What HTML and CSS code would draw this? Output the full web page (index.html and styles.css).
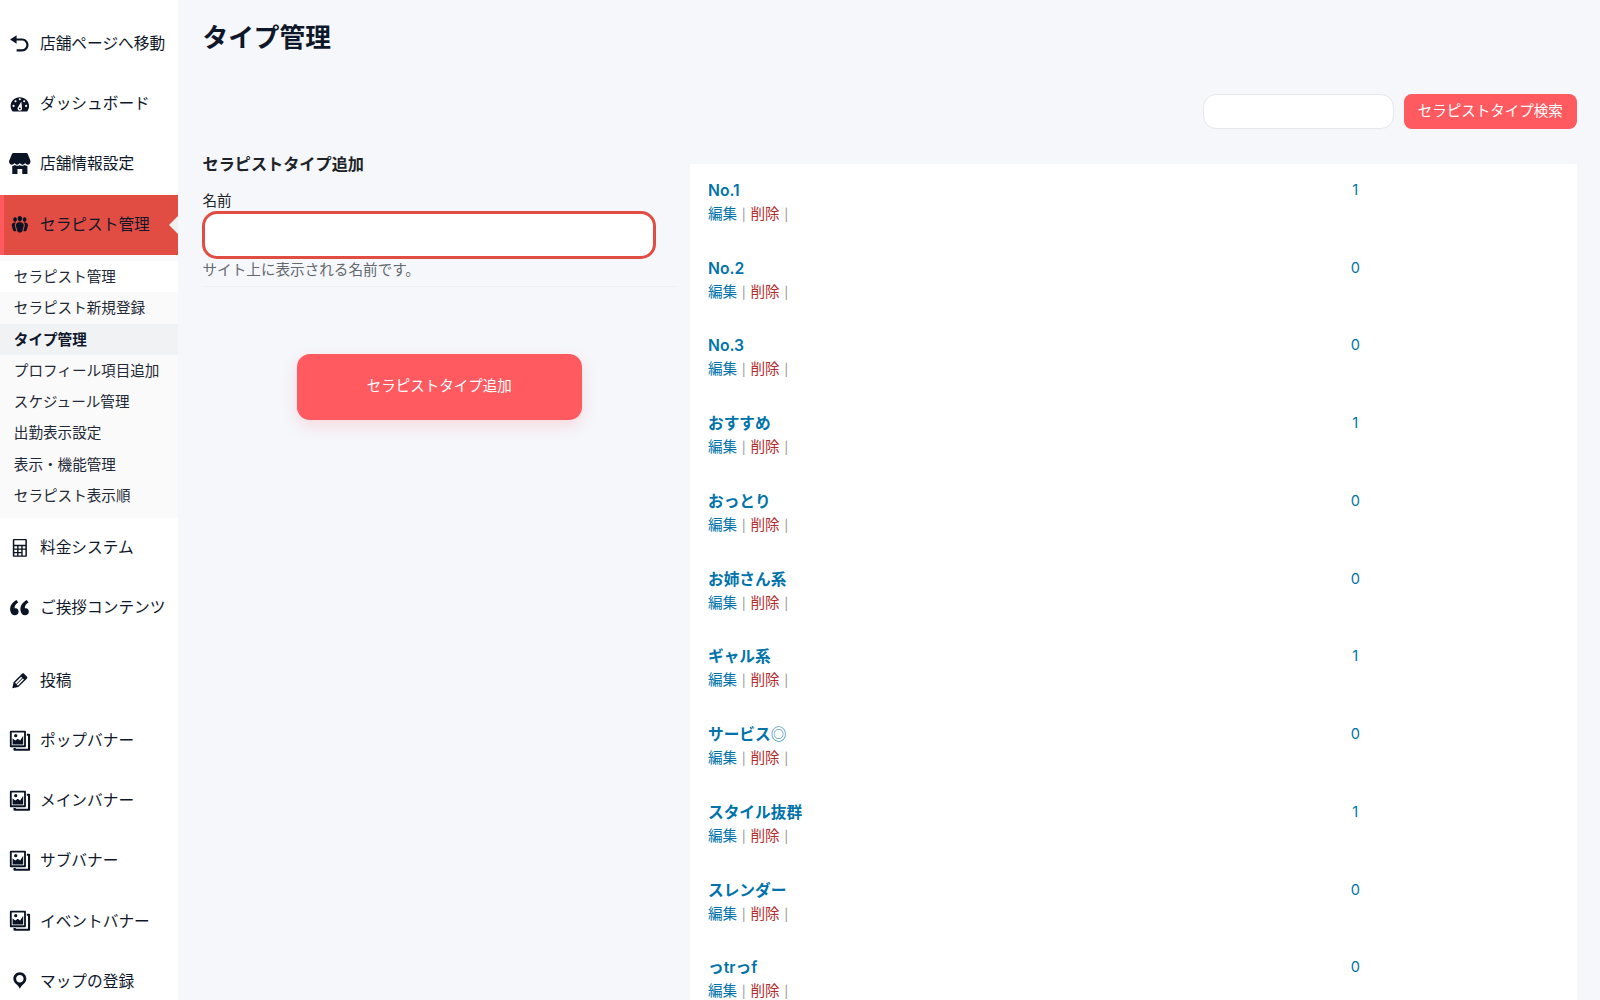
FILE: index.html
```html
<!DOCTYPE html>
<html lang="ja">
<head>
<meta charset="utf-8">
<title>タイプ管理</title>
<link rel="stylesheet" href="styles.css">
</head>
<body>
<svg class="sprite" aria-hidden="true">
  <symbol id="undo" viewBox="0 0 20 20"><path d="M12 5H7V2L1 6l6 4V7h5c2.2 0 4 1.8 4 4s-1.8 4-4 4H7v2h5c3.3 0 6-2.7 6-6s-2.7-6-6-6z"/></symbol>
  <symbol id="dashboard" viewBox="0 0 20 20"><path fill-rule="evenodd" d="M3.300 17h13.400c1.100-1.370 1.800-3.110 1.800-5 0-4.420-3.800-8-8.500-8s-8.500 3.580-8.500 8c0 1.890.7 3.630 1.800 5zM10 4.800a1 1 0 1 1 0 2 1 1 0 0 1 0-2zM6 6.600a1 1 0 1 1 0 2 1 1 0 0 1 0-2zM14 6.600a1 1 0 1 1 0 2 1 1 0 0 1 0-2zM4.200 10.900a1 1 0 1 1 0 2 1 1 0 0 1 0-2zM15.800 10.900a1 1 0 1 1 0 2 1 1 0 0 1 0-2zM11.400 7.800l.6 6a2.100 2.100 0 1 1-3.900-.5zM10 13.300a.9.9 0 1 0 0 1.800.9.9 0 0 0 0-1.800z"/></symbol>
  <symbol id="store" viewBox="0 0 20 20"><path d="M4 0h12c.6 0 .9.2 1.200.7L20 7.500c0 1.900-1.300 3.300-2.700 3.300-1.300 0-2.200-.7-2.400-1.700-.2 1-1.200 1.700-2.400 1.700s-2.300-.7-2.500-1.700c-.2 1-1.300 1.700-2.500 1.700s-2.200-.7-2.400-1.700c-.2 1-1.100 1.700-2.400 1.700C1.300 10.800 0 9.400 0 7.500L2.800.7C3.100.2 3.400 0 4 0z"/><path d="M3 12c1 0 1.700-.3 2.300-.9.800.7 3.700 1.300 4.700 0 1 1.300 3.900.7 4.700 0 .6.600 1.300.9 2.300.9v7.500h-4.800v-4.800H7.800v4.800H3z"/></symbol>
  <symbol id="groups" viewBox="0 0 20 20"><path d="M8.030 4.460c-.29 1.280.55 3.460 1.970 3.460 1.410 0 2.250-2.180 1.960-3.460-.22-.98-1.080-1.630-1.960-1.630-.89 0-1.740.65-1.970 1.630zm-4.130.9c-.25 1.080.47 2.930 1.670 2.930s1.920-1.850 1.670-2.930c-.19-.83-.92-1.390-1.670-1.390s-1.480.56-1.670 1.390zm8.860 0c-.25 1.080.47 2.930 1.660 2.930 1.200 0 1.920-1.850 1.670-2.930-.19-.83-.92-1.390-1.670-1.390-.74 0-1.470.56-1.660 1.390zm-.59 11.430l1.250-4.300C14.200 10 12.710 8.470 10 8.470c-2.720 0-4.210 1.530-3.440 4.020l1.260 4.300C8.050 17.510 9 18 10 18c.98 0 1.940-.49 2.170-1.210zm-6.100-7.630c-.49.67-.96 1.830-.42 3.590l1.120 3.790c-.34.2-.77.31-1.200.31-.85 0-1.650-.41-1.850-1.030l-1.070-3.650c-.65-2.110.61-3.400 2.920-3.400.27 0 .54.02.79.06-.1.1-.2.22-.29.33zm8.350-.39c2.310 0 3.580 1.290 2.920 3.400l-1.070 3.650c-.2.62-1 1.030-1.850 1.030-.43 0-.86-.11-1.200-.31l1.110-3.770c.55-1.780.08-2.940-.42-3.610-.08-.11-.18-.23-.28-.33.25-.04.51-.06.79-.06z"/></symbol>
  <symbol id="calculator" viewBox="0 0 20 20"><path fill-rule="evenodd" d="M4.600 1.800h10.800q1.100 0 1.100 1.100v14.300q0 1.100-1.100 1.100H4.600q-1.100 0-1.100-1.100V2.900q0-1.100 1.100-1.100zM4.900 3.100v4.100h10.200V3.100zM4.900 8.600v2.100h2.600V8.600zM8.800 8.600v2.100h2.500V8.600zM12.600 8.600v2.100h2.500V8.600zM4.900 11.800v2.100h2.600v-2.100zM8.800 11.800v2.100h2.500v-2.100zM4.900 15v2.100h2.600V15zM8.800 15v2.100h2.500V15zM12.600 11.800v5.300h2.500v-5.300z"/></symbol>
  <symbol id="quote" viewBox="2 1.700 17 17"><path d="M9.490 13.220c0-.74-.2-1.380-.61-1.900-.62-.78-1.830-.88-2.530-.72-.29-1.650 1.110-3.750 2.920-4.650L7.880 4c-2.730 1.300-5.420 4.280-4.960 8.050C3.210 14.430 4.590 16 6.540 16c.85 0 1.560-.25 2.120-.75s.83-1.180.83-2.030zm8.050 0c0-.74-.2-1.380-.61-1.900-.63-.78-1.830-.88-2.530-.72-.29-1.650 1.110-3.750 2.920-4.650L15.930 4c-2.730 1.300-5.410 4.280-4.950 8.050.29 2.380 1.660 3.950 3.610 3.950.85 0 1.560-.25 2.120-.75s.83-1.180.83-2.030z"/></symbol>
  <symbol id="edit" viewBox="0 0 20 20"><path d="M13.890 3.390l2.710 2.720c.46.46.42 1.240.03 1.640l-8.010 8.020-5.560 1.160 1.160-5.580s7.600-7.630 7.990-8.030c.39-.39 1.220-.39 1.680.07zm-2.730 2.790l-5.590 5.610 1.110 1.110 5.540-5.650zm-2.970 8.230l5.580-5.600-1.070-1.080-5.590 5.600z"/></symbol>
  <symbol id="images" viewBox="0 0 20 20"><path fill-rule="evenodd" d="M1.600.7h13.200q.8 0 .8.800v13.500q0 .8-.8.800H1.600q-.8 0-.8-.8V1.500q0-.8.800-.8zM2.500 2.400v11.700h11.400V2.400z"/><path d="M3.300 13.400V7.800l2.600 1.900 2.100-1.700 2.300 1.600 2.800-4.300v8.100z"/><circle cx="6.200" cy="5.200" r="1.500"/><path d="M16.400 3.400h2.200q.9 0 .9.900v14q0 .9-.9.900H5q-.9 0-.9-.9v-1.700h2.200v.6h11.200V5.200h-1.100z"/></symbol>
  <symbol id="location" viewBox="0 0 20 20"><path d="M10 2C6.690 2 4 4.690 4 8c0 2.020 1.170 3.710 2.530 4.890.43.37 1.180.96 1.850 1.830.74.97 1.410 2.010 1.620 2.710.21-.7.88-1.740 1.620-2.710.67-.87 1.420-1.460 1.850-1.830C14.830 11.710 16 10.020 16 8c0-3.310-2.690-6-6-6zm0 2.560c1.900 0 3.440 1.540 3.440 3.440S11.900 11.440 10 11.440 6.560 9.900 6.560 8 8.100 4.560 10 4.560z"/></symbol>
</svg>
<div class="layout">
  <nav class="sidebar">
    <a class="item"><svg><use href="#undo"/></svg>店舗ページへ移動</a>
    <a class="item"><svg><use href="#dashboard"/></svg>ダッシュボード</a>
    <a class="item"><svg><use href="#store"/></svg>店舗情報設定</a>
    <a class="item current"><svg><use href="#groups"/></svg>セラピスト管理</a>
    <div class="submenu">
      <a class="first">セラピスト管理</a>
      <a>セラピスト新規登録</a>
      <a class="selected">タイプ管理</a>
      <a>プロフィール項目追加</a>
      <a>スケジュール管理</a>
      <a>出勤表示設定</a>
      <a>表示・機能管理</a>
      <a>セラピスト表示順</a>
    </div>
    <a class="item"><svg><use href="#calculator"/></svg>料金システム</a>
    <a class="item"><svg><use href="#quote"/></svg>ご挨拶コンテンツ</a>
    <div class="separator"></div>
    <a class="item"><svg><use href="#edit"/></svg>投稿</a>
    <a class="item"><svg><use href="#images"/></svg>ポップバナー</a>
    <a class="item"><svg><use href="#images"/></svg>メインバナー</a>
    <a class="item"><svg><use href="#images"/></svg>サブバナー</a>
    <a class="item"><svg><use href="#images"/></svg>イベントバナー</a>
    <a class="item"><svg><use href="#location"/></svg>マップの登録</a>
  </nav>
  <main class="content">
    <h1>タイプ管理</h1>
    <form class="search">
      <input type="text" aria-label="セラピストタイプ検索">
      <button type="button">セラピストタイプ検索</button>
    </form>
    <div class="columns">
      <form class="add">
        <h2>セラピストタイプ追加</h2>
        <label for="name">名前</label>
        <input id="name" type="text">
        <p>サイト上に表示される名前です。</p>
        <button type="button">セラピストタイプ追加</button>
      </form>
      <section class="types">
        <div class="row"><div><strong>No.1</strong><span class="actions"><a>編集</a><i>|</i><a class="del">削除</a><i>|</i></span></div><a class="count">1</a></div>
        <div class="row"><div><strong>No.2</strong><span class="actions"><a>編集</a><i>|</i><a class="del">削除</a><i>|</i></span></div><a class="count">0</a></div>
        <div class="row"><div><strong>No.3</strong><span class="actions"><a>編集</a><i>|</i><a class="del">削除</a><i>|</i></span></div><a class="count">0</a></div>
        <div class="row"><div><strong>おすすめ</strong><span class="actions"><a>編集</a><i>|</i><a class="del">削除</a><i>|</i></span></div><a class="count">1</a></div>
        <div class="row"><div><strong>おっとり</strong><span class="actions"><a>編集</a><i>|</i><a class="del">削除</a><i>|</i></span></div><a class="count">0</a></div>
        <div class="row"><div><strong>お姉さん系</strong><span class="actions"><a>編集</a><i>|</i><a class="del">削除</a><i>|</i></span></div><a class="count">0</a></div>
        <div class="row"><div><strong>ギャル系</strong><span class="actions"><a>編集</a><i>|</i><a class="del">削除</a><i>|</i></span></div><a class="count">1</a></div>
        <div class="row"><div><strong>サービス<span class="mark">◎</span></strong><span class="actions"><a>編集</a><i>|</i><a class="del">削除</a><i>|</i></span></div><a class="count">0</a></div>
        <div class="row"><div><strong>スタイル抜群</strong><span class="actions"><a>編集</a><i>|</i><a class="del">削除</a><i>|</i></span></div><a class="count">1</a></div>
        <div class="row"><div><strong>スレンダー</strong><span class="actions"><a>編集</a><i>|</i><a class="del">削除</a><i>|</i></span></div><a class="count">0</a></div>
        <div class="row"><div><strong>っtrっf</strong><span class="actions"><a>編集</a><i>|</i><a class="del">削除</a><i>|</i></span></div><a class="count">0</a></div>
      </section>
    </div>
  </main>
</div>
</body>
</html>
```
FILE: styles.css
```css
* { box-sizing: border-box; }
body {
  margin: 0;
  height: 1000px;
  overflow: hidden;
  background: #f5f7fb;
  color: #1d2327;
  font: 14.6px/20px Inter, "Noto Sans CJK JP", sans-serif;
}
input, button { font: inherit; margin: 0; }
.sprite { display: none; }
.layout { display: flex; height: 1000px; overflow: hidden; }

.sidebar {
  flex: none;
  width: 178px;
  padding-top: 14.400px;
  background: #fff;
  color: #0f172a;
}
.item {
  display: flex;
  align-items: center;
  gap: 9px;
  height: 60.100px;
  padding: 0 0 1px 9.300px;
  font-size: 15.700px;
  white-space: nowrap;
}
.item svg { flex: none; width: 21.700px; height: 21.700px; margin-top: -1px; fill: #0b1424; }
.current {
  position: relative;
  padding: 0 0 0 5.300px;
  border-left: 4px solid #ff5a5f;
  background: #e14d43;
}
.current::after {
  content: "";
  position: absolute;
  right: 0;
  top: 21px;
  border: 9px solid transparent;
  border-left-width: 0;
  border-right-color: #f0f0f1;
}
.submenu { padding-top: 6.300px; height: 263.400px; background: #fafafa; color: #1f2937; }
.submenu a { display: flex; align-items: center; height: 31.250px; padding: 1px 0 0 13.800px; font-size: 14.600px; }
.submenu .first { background: #fff; }
.submenu .selected { background: #f1f2f4; color: #0f172a; font-weight: 700; }
.submenu ~ .item { padding-bottom: 0; }
.separator { height: 12.800px; }

.content { flex: 1; padding: 0 23px 0 24.500px; }
h1 { margin: 0; padding-top: 18px; font-size: 25.700px; line-height: 40px; color: #0f172a; }
.search { display: flex; justify-content: flex-end; gap: 10px; margin-top: 35.500px; }
.search input {
  width: 190.500px;
  height: 35.500px;
  border: 1px solid #e5e7eb;
  border-radius: 13px;
  background: #fff;
}
.search button {
  width: 173.500px;
  height: 35.500px;
  padding: 0;
  border: 0;
  border-radius: 8px;
  background: #ff5a5f;
  color: #fff;
  font-size: 14.500px;
}
.columns { display: flex; gap: 13px; margin-top: 34.500px; }
.add { flex: none; width: 474.500px; }
.add h2 { margin: -11px 0 16px; font-size: 16.150px; line-height: 22px; }
.add label { display: block; height: 20.500px; }
.add input {
  display: block;
  width: 454.500px;
  height: 47.500px;
  margin: 0 0 1px -1px;
  border: 3px solid #e14d43;
  border-radius: 15px;
  background: #fff;
}
.add p { margin: 0; padding-bottom: 6px; border-bottom: 1px solid #f0f0f1; color: #646970; }
.add button {
  display: block;
  width: 285.500px;
  height: 66.500px;
  margin: 67px 0 0 94px;
  padding: 0 0 1px;
  border: 0;
  border-radius: 13px;
  background: #ff5a5f;
  color: #fff;
  font-size: 14.500px;
  box-shadow: 0 6px 16px rgba(255, 90, 95, .18);
}
.types { flex: 1; padding: 0 18px; background: #fff; height: 840px; color: #0073aa; }
.row { display: grid; grid-template-columns: 636px 1fr; height: 77.750px; padding-top: 15.300px; }
.row strong { display: block; font-size: 15.700px; line-height: 24px; font-weight: 600; }
.row .mark { font-weight: 400; }
.actions { display: flex; line-height: 23px; }
.actions i {
  width: 13.200px;
  text-align: center;
  font-size: 12px;
  font-style: normal;
  color: #8f9193;
}
.actions a { color: #0073aa; }
.actions .del { color: #b32d2e; }
.count { line-height: 23px; width: 22.500px; text-align: center; }
```
